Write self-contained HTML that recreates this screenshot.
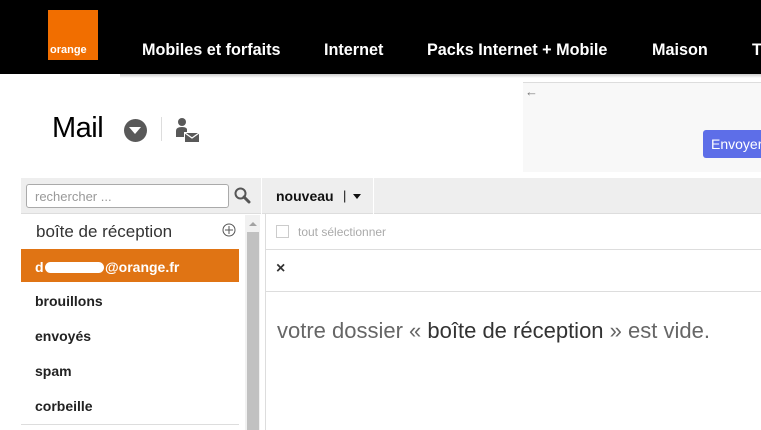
<!DOCTYPE html>
<html><head><meta charset="utf-8"><style>
*{margin:0;padding:0;box-sizing:border-box}
body{width:761px;height:430px;overflow:hidden;background:#fff;font-family:"Liberation Sans",Arial,sans-serif;position:relative}
.a{position:absolute;white-space:nowrap}
.nav{color:#fff;font-weight:bold;font-size:16.2px;top:41px}
.fi{font-weight:bold;font-size:14px;color:#222;left:35px}
</style></head><body>
<div class="a" style="left:0;top:0;width:761px;height:74px;background:#000"></div>
<div class="a" style="left:120px;top:74px;width:641px;height:4px;background:linear-gradient(#ccc,#fff)"></div>
<div class="a" style="left:48px;top:10px;width:50px;height:50px;background:#f16e00"></div>
<div class="a" style="left:50px;top:44px;color:#fff;font-weight:bold;font-size:11px">orange</div>
<div class="a nav" style="left:142px">Mobiles et forfaits</div>
<div class="a nav" style="left:324px">Internet</div>
<div class="a nav" style="left:427px">Packs Internet + Mobile</div>
<div class="a nav" style="left:652px">Maison</div>
<div class="a nav" style="left:752px">T</div>

<div class="a" style="left:52px;top:112px;font-size:29px;color:#000;letter-spacing:-0.5px">Mail</div>
<div class="a" style="left:124px;top:119px;width:23px;height:23px;border-radius:50%;background:#595959"></div>
<div class="a" style="left:129px;top:127px;width:0;height:0;border-left:6.5px solid transparent;border-right:6.5px solid transparent;border-top:7px solid #fff"></div>
<div class="a" style="left:161px;top:117px;width:1px;height:24px;background:#ddd"></div>
<svg class="a" style="left:175px;top:117px" width="26" height="26" viewBox="0 0 26 26"><circle cx="7" cy="5" r="4" fill="#595959"/><path d="M1 20 V14 Q1 10 7 10 Q11 10 12 12 V20 Z" fill="#595959"/><rect x="9" y="15" width="16" height="11" fill="#fff"/><rect x="10" y="16" width="14" height="9" fill="#595959"/><path d="M10 16 L17 21 L24 16" stroke="#fff" stroke-width="1.3" fill="none"/></svg>

<div class="a" style="left:523px;top:82px;width:238px;height:90px;background:#f8f8f8;border-top:1px solid #ddd"></div>
<div class="a" style="left:525px;top:84px;font-size:13px;color:#777">←</div>
<div class="a" style="left:703px;top:130px;width:70px;height:28px;background:#5d6ee8;border-radius:3px;color:#fff;font-size:14px;padding:6px 0 0 8px">Envoyer</div>

<div class="a" style="left:21px;top:178px;width:740px;height:36px;background:#eee;border-bottom:1px solid #ddd"></div>
<div class="a" style="left:261px;top:178px;width:1px;height:36px;background:#fff"></div>
<div class="a" style="left:373px;top:178px;width:1px;height:36px;background:#fff"></div>
<div class="a" style="left:26px;top:184px;width:203px;height:24px;background:#fff;border:1px solid #aaa;border-radius:3px;font-size:13px;color:#999;padding:4px 0 0 8px">rechercher ...</div>
<svg class="a" style="left:234px;top:187px" width="17" height="17" viewBox="0 0 17 17"><circle cx="6.5" cy="6.5" r="5" stroke="#555" stroke-width="2" fill="none"/><path d="M10 10 L15 15" stroke="#555" stroke-width="3" stroke-linecap="round"/></svg>
<div class="a" style="left:276px;top:188px;font-weight:bold;font-size:14px;color:#111">nouveau</div>
<div class="a" style="left:343px;top:188px;font-size:13px;color:#111">|</div>
<div class="a" style="left:353px;top:194px;width:0;height:0;border-left:4.5px solid transparent;border-right:4.5px solid transparent;border-top:5px solid #111"></div>

<div class="a" style="left:36px;top:222px;font-size:17px;color:#333">boîte de réception</div>
<svg class="a" style="left:222px;top:223px" width="14" height="14"><circle cx="7" cy="7" r="6" stroke="#555" fill="none"/><path d="M7 3V11M3 7H11" stroke="#555"/></svg>
<div class="a" style="left:21px;top:249px;width:218px;height:33px;background:#e07414"></div>
<div class="a" style="left:35px;top:259px;color:#fff;font-weight:bold;font-size:14px">d</div>
<div class="a" style="left:45px;top:262px;width:59px;height:11px;background:#fff;border-radius:6px"></div>
<div class="a" style="left:105px;top:259px;color:#fff;font-weight:bold;font-size:14px">@orange.fr</div>
<div class="a fi" style="top:293px">brouillons</div>
<div class="a fi" style="top:328px">envoyés</div>
<div class="a fi" style="top:363px">spam</div>
<div class="a fi" style="top:398px">corbeille</div>
<div class="a" style="left:21px;top:424px;width:218px;height:1px;background:#ddd"></div>
<div class="a" style="left:245px;top:215px;width:15px;height:215px;background:#f1f1f1"></div>
<div class="a" style="left:247px;top:232px;width:12px;height:198px;background:#c1c1c1"></div>
<div class="a" style="left:249px;top:222px;border-left:4px solid transparent;border-right:4px solid transparent;border-bottom:4px solid #a3a3a3"></div>
<div class="a" style="left:265px;top:214px;width:1px;height:216px;background:#ddd"></div>

<div class="a" style="left:276px;top:225px;width:13px;height:13px;border:1px solid #ccc;background:#fff"></div>
<div class="a" style="left:298px;top:225px;font-size:12px;color:#aaa">tout sélectionner</div>
<div class="a" style="left:266px;top:249px;width:495px;height:1px;background:#ddd"></div>
<div class="a" style="left:276px;top:260px;font-size:16px;font-weight:bold;color:#333">×</div>
<div class="a" style="left:266px;top:291px;width:495px;height:1px;background:#ddd"></div>
<div class="a" style="left:277px;top:318px;font-size:22px;color:#666">votre dossier « <span style="color:#333">boîte de réception</span> » est vide.</div>
</body></html>
